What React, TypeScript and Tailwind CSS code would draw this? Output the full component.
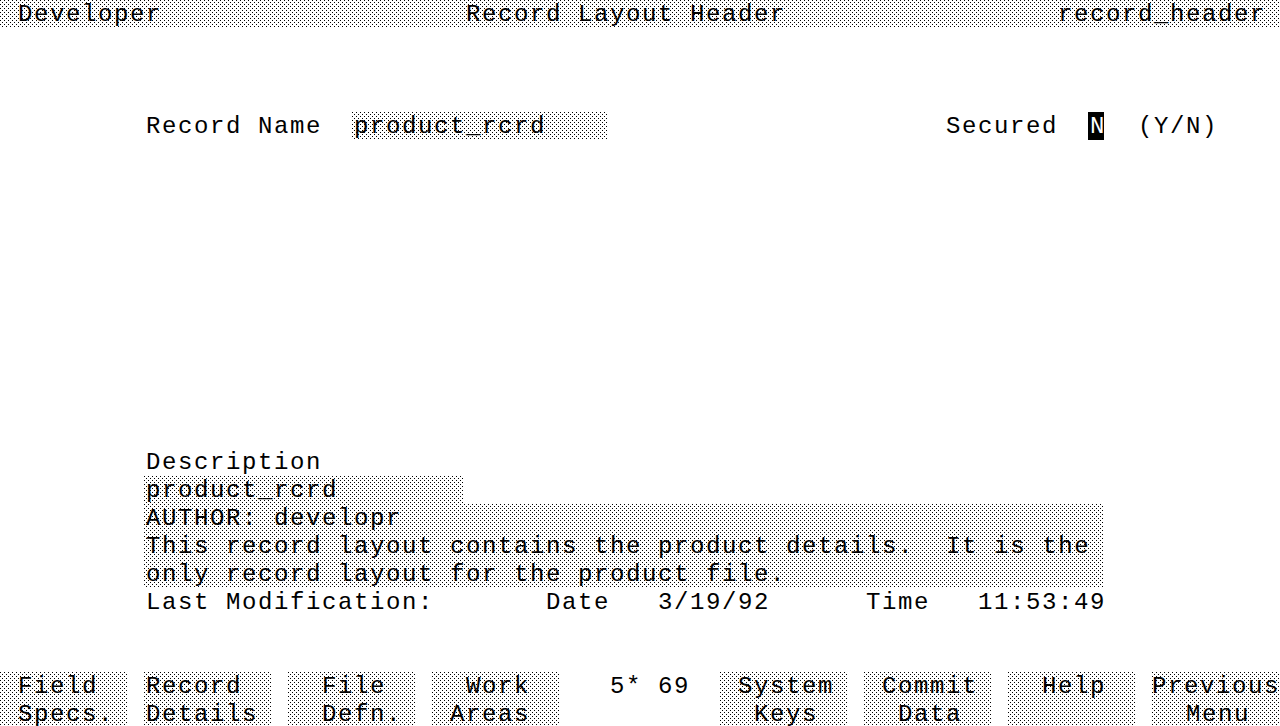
import React from "react";

type Seg = { pos: string; text: string; fill?: "dither" | "inverse"; tight?: boolean };

// 1-bit halftone used by the terminal for field / softkey backgrounds:
// staggered single pixels in a 4x4 tile
const dither =
  "bg-white [background-image:url(data:image/svg+xml,%3Csvg%20xmlns=%27http://www.w3.org/2000/svg%27%20width=%274%27%20height=%274%27%20shape-rendering=%27crispEdges%27%3E%3Crect%20width=%271%27%20height=%271%27/%3E%3Crect%20x=%272%27%20y=%272%27%20width=%271%27%20height=%271%27/%3E%3C/svg%3E)] [background-size:4px_4px]";

// one entry per terminal line (80 cols x 26 lines, 16x28 cells)
const screen: Record<number, Seg[]> = {
  0: [
    { pos: "col-[1/span_80]", fill: "dither", text: " Developer" },
    { pos: "col-[30/span_20]", text: "Record Layout Header" },
    { pos: "col-[67/span_13]", text: "record_header" },
  ],
  4: [
    { pos: "col-[10/span_11]", text: "Record Name" },
    { pos: "col-[23/span_16]", fill: "dither", text: "product_rcrd" },
    { pos: "col-[60/span_7]", text: "Secured" },
    { pos: "col-[69/span_1]", fill: "inverse", text: "N" },
    { pos: "col-[72/span_5]", text: "(Y/N)" },
  ],
  16: [{ pos: "col-[10/span_11]", text: "Description" }],
  17: [{ pos: "col-[10/span_20]", fill: "dither", text: "product_rcrd" }],
  18: [{ pos: "col-[10/span_60]", fill: "dither", text: "AUTHOR: developr" }],
  19: [
    {
      pos: "col-[10/span_60]",
      fill: "dither",
      text: "This record layout contains the product details.  It is the",
    },
  ],
  20: [{ pos: "col-[10/span_60]", fill: "dither", text: "only record layout for the product file." }],
  21: [
    { pos: "col-[10/span_18]", text: "Last Modification:" },
    { pos: "col-[35/span_4]", text: "Date" },
    { pos: "col-[42/span_7]", text: "3/19/92" },
    { pos: "col-[55/span_4]", text: "Time" },
    { pos: "col-[62/span_8]", text: "11:53:49" },
  ],
  24: [
    { pos: "col-[1/span_8]", fill: "dither", text: " Field" },
    { pos: "col-[10/span_8]", fill: "dither", text: "Record" },
    { pos: "col-[19/span_8]", fill: "dither", text: "  File" },
    { pos: "col-[28/span_8]", fill: "dither", text: "  Work" },
    { pos: "col-[39/span_5]", text: "5* 69" },
    { pos: "col-[46/span_8]", fill: "dither", text: " System" },
    { pos: "col-[55/span_8]", fill: "dither", text: " Commit" },
    { pos: "col-[64/span_8]", fill: "dither", text: "  Help" },
    { pos: "col-[73/span_8]", fill: "dither", text: "Previous", tight: true },
  ],
  25: [
    { pos: "col-[1/span_8]", fill: "dither", text: " Specs." },
    { pos: "col-[10/span_8]", fill: "dither", text: "Details" },
    { pos: "col-[19/span_8]", fill: "dither", text: "  Defn." },
    { pos: "col-[28/span_8]", fill: "dither", text: " Areas" },
    { pos: "col-[46/span_8]", fill: "dither", text: "  Keys" },
    { pos: "col-[55/span_8]", fill: "dither", text: "  Data" },
    { pos: "col-[64/span_8]", fill: "dither", text: "" },
    { pos: "col-[73/span_8]", fill: "dither", text: "  Menu" },
  ],
};

function Line({ segs }: { segs: Seg[] }) {
  return (
    <div className="grid h-[28px] grid-cols-[repeat(80,16px)]">
      {segs.map((s, i) => {
        const fill =
          s.fill === "dither" ? dither : s.fill === "inverse" ? "bg-black text-white" : "";
        const pad = s.tight ? "pl-0" : "pl-[2px]";
        return (
          <span key={i} className={`${s.pos} ${fill} ${pad} row-start-1 whitespace-pre pt-px`}>
            {s.text}
          </span>
        );
      })}
    </div>
  );
}

export default function App() {
  const rows = Array.from({ length: 26 }, (_, i) => i);
  return (
    <div className="h-[726px] w-[1280px] overflow-hidden bg-white font-['Liberation_Mono',monospace] text-[24px] leading-[27px] tracking-[1.6px] text-black">
      {rows.map((r) => (
        <Line key={r} segs={screen[r] ?? []} />
      ))}
    </div>
  );
}
